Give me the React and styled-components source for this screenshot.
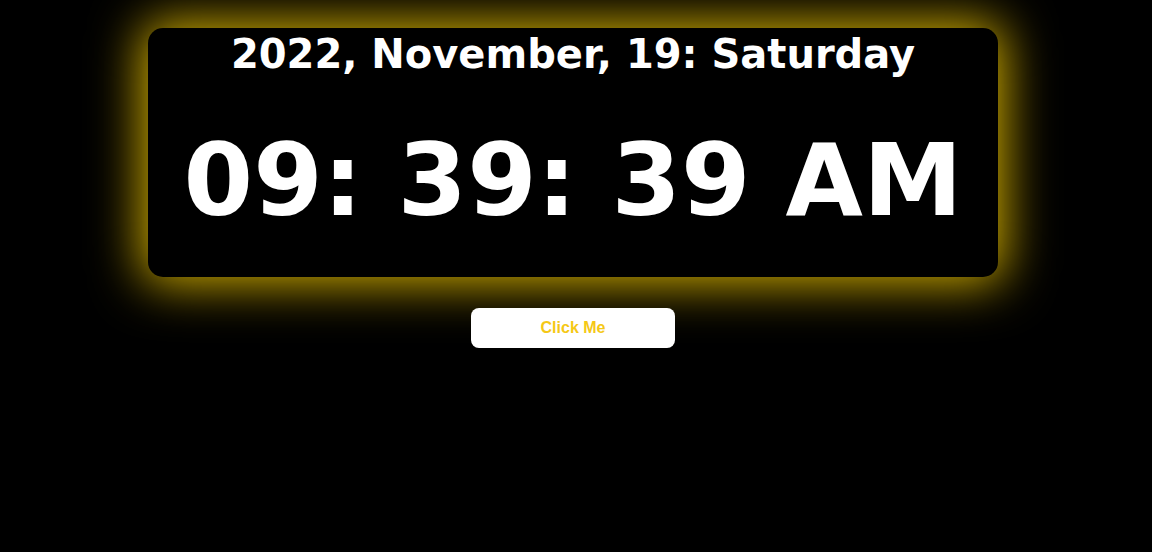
import React from "react";
import styled, { createGlobalStyle } from "styled-components";

const Global = createGlobalStyle`
  html, body {
    margin: 0;
    background: #000;
  }
  body {
    font-family: Verdana, "DejaVu Sans", sans-serif;
  }
`;

const Page = styled.div`
  width: 1146px;
  height: 552px;
  display: flex;
  flex-direction: column;
  align-items: center;
  padding-top: 28px;
  box-sizing: border-box;
`;

const Clock = styled.div`
  width: 850px;
  height: 249px;
  background: #000;
  border-radius: 15px;
  box-shadow: 0 0 50px 6px #d4b000;
  display: flex;
  flex-direction: column;
  align-items: center;
  color: #fff;
  font-weight: bold;
`;

const DateLine = styled.div`
  font-size: 40px;
  line-height: 50px;
  margin-top: 1px;
`;

const Time = styled.div`
  font-size: 100px;
  line-height: 120px;
  margin-top: 42px;
`;

const Button = styled.button`
  margin-top: 31px;
  width: 204px;
  height: 40px;
  border: none;
  border-radius: 8px;
  background: #fff;
  color: #f5c816;
  font-family: "Liberation Sans", Arial, sans-serif;
  font-weight: bold;
  font-size: 16px;
  cursor: pointer;
`;

export default function App() {
  return (
    <>
      <Global />
      <Page>
        <Clock>
          <DateLine>2022, November, 19: Saturday</DateLine>
          <Time>09: 39: 39 AM</Time>
        </Clock>
        <Button>Click Me</Button>
      </Page>
    </>
  );
}
